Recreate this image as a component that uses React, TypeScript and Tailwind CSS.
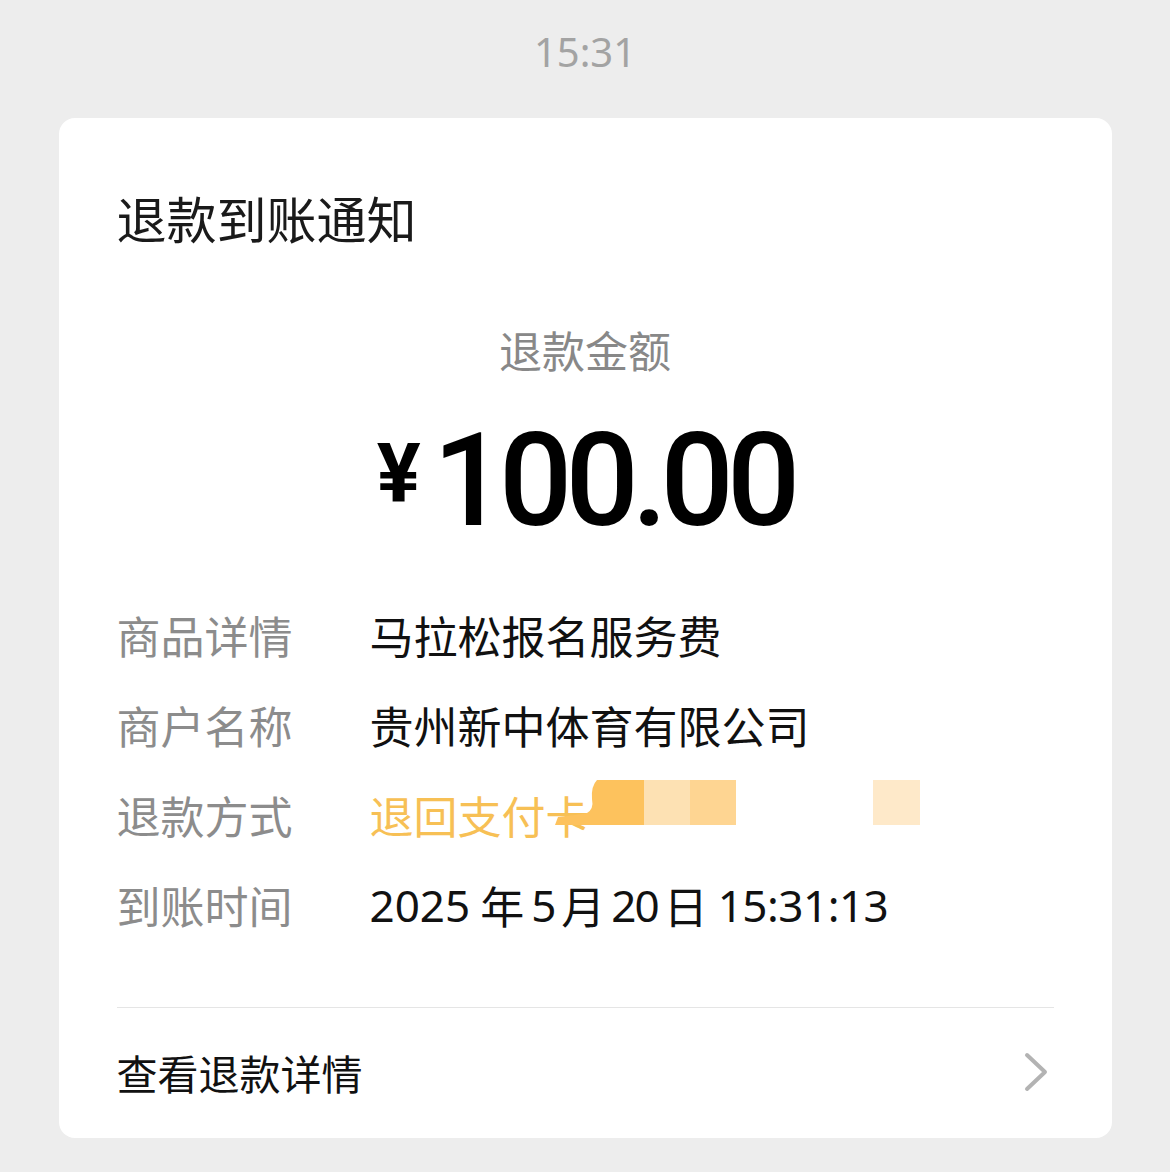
import React from "react";

const cjk = { fontFamily: '"Noto Sans CJK SC", "Noto Sans", sans-serif' };

function Row({ label, children }: { label: string; children: React.ReactNode }) {
  return (
    <div className="flex items-center h-[90px]">
      <div className="w-[253px] shrink-0 text-[44px] text-[#8c8c8c] leading-none">{label}</div>
      <div className="text-[44px] text-[#111] leading-none relative flex items-center">{children}</div>
    </div>
  );
}

const latin = { fontFamily: '"Noto Sans", sans-serif' };

export default function App() {
  return (
    <div className="w-[1170px] h-[1172px] bg-[#ededed] flex flex-col items-center" style={cjk}>
      <div className="h-[118px] flex items-center justify-center pb-[14px] text-[40px] text-[#a3a3a3]" style={latin}>
        15:31
      </div>
      <div className="w-[1053px] bg-white rounded-[16px] px-[58px] flex flex-col">
        <div className="pt-[74px] text-[50px] text-[#1a1a1a] leading-none">退款到账通知</div>
        <div className="mt-[86px] text-center text-[43px] text-[#888] leading-none">退款金额</div>
        <div className="mt-[62px] flex justify-center items-end h-[112px]" style={{ fontFamily: 'Roboto, "Noto Sans", sans-serif' }}>
          <span className="text-[82px] font-bold text-black leading-none mr-[12px] mb-[31px]">¥</span>
          <span className="text-[129px] font-medium text-black leading-none tracking-[-7px]">100.00</span>
        </div>
        <div className="mt-[45px] flex flex-col">
          <Row label="商品详情">马拉松报名服务费</Row>
          <Row label="商户名称">贵州新中体育有限公司</Row>
          <Row label="退款方式">
            <span className="text-[#f7c055]">退回支付卡</span>
            <svg className="absolute left-[185px] top-[-13px]" width="89" height="45" viewBox="0 0 89 45">
              <path d="M42 0 H89 V45 H0 L3 37 Q 22 35 32 33 Q 39 29 37 19 Q 36 6 42 0 Z" fill="#fdc25d" />
            </svg>
            <span className="absolute left-[274px] top-[-13px] w-[46px] h-[45px] bg-[#fde1b3]"></span>
            <span className="absolute left-[320px] top-[-13px] w-[46px] h-[45px] bg-[#fed592]"></span>
            <span className="absolute left-[503px] top-[-13px] w-[47px] h-[45px] bg-[#fee9c9]"></span>
          </Row>
          <Row label="到账时间">
            <span style={latin}>2025</span>
            <span className="ml-[10px]">年</span>
            <span className="ml-[7px]" style={latin}>5</span>
            <span className="ml-[5px]">月</span>
            <span className="ml-[6px] tracking-[-2px]" style={latin}>20</span>
            <span className="ml-[6px]">日</span>
            <span className="ml-[10px] tracking-[-0.5px]" style={latin}>15:31:13</span>
          </Row>
        </div>
        <div className="mt-[57px] border-t border-[#e5e5e5]"></div>
        <div className="h-[130px] flex items-center justify-between pb-[2px]">
          <span className="text-[41px] text-[#111] leading-none">查看退款详情</span>
          <svg width="30" height="42" viewBox="0 0 30 42" className="mr-[2px]">
            <path d="M5 4 L23 21 L5 38" fill="none" stroke="#b3b3b3" strokeWidth="4" strokeLinecap="round" strokeLinejoin="round" />
          </svg>
        </div>
      </div>
    </div>
  );
}
